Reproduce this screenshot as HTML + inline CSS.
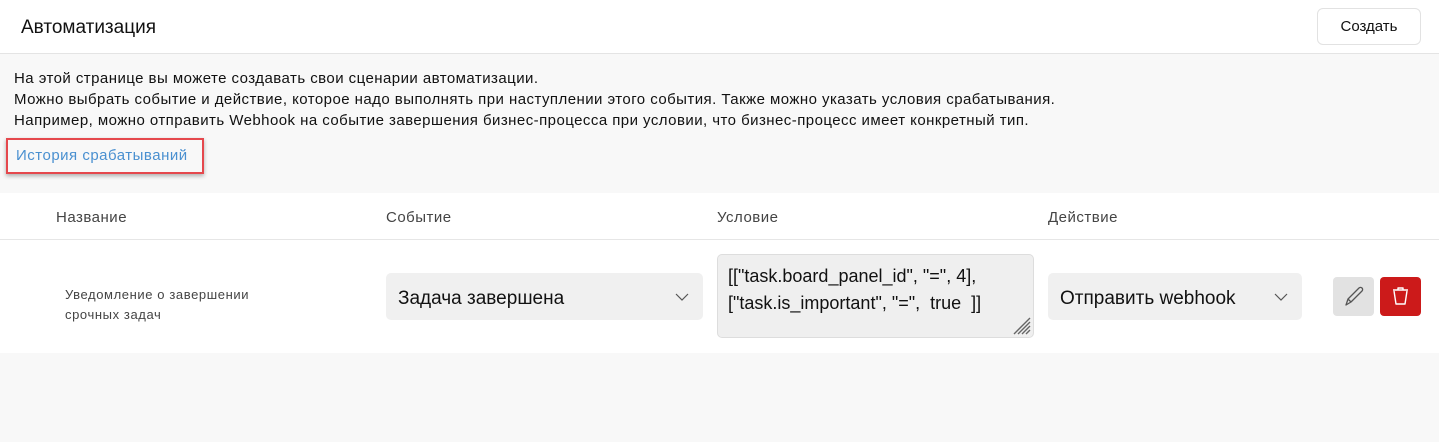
<!DOCTYPE html>
<html><head><meta charset="utf-8"><style>
*{box-sizing:border-box;margin:0;padding:0}
body{width:1439px;height:442px;background:#f8f8f8;font-family:"Liberation Sans","DejaVu Sans",sans-serif;color:#111;position:relative;overflow:hidden}
.abs{position:absolute}
.hdr{left:0;top:0;width:1439px;height:54px;background:#fff;border-bottom:1px solid #e4e4e4}
.title{left:21px;top:17px;font-size:19px;color:#111}
.btn{left:1317px;top:8px;width:104px;height:37px;border:1px solid #e2e2e2;border-radius:6px;background:#fff;font-size:15px;text-align:center;line-height:35px}
.desc{left:14px;top:68px;font-size:15px;letter-spacing:.45px;line-height:21px;color:#111;white-space:nowrap}
.link{left:6px;top:138px;width:198px;height:36px;border:2px solid #e5484d;box-shadow:0 2px 4px rgba(0,0,0,.3);color:#4a90d0;font-size:15px;letter-spacing:.5px;padding:7px 0 0 8px;white-space:nowrap}
.tbl{left:0;top:193px;width:1439px;height:160px;background:#fff}
.th{top:209px;font-size:15px;letter-spacing:.5px;color:#444}
.line{left:0;top:239px;width:1439px;height:1px;background:#e6e6e6}
.name{left:65px;top:285px;font-size:13px;letter-spacing:.6px;line-height:20px;color:#444}
.sel{top:273px;height:47px;background:#f0f0f0;border-radius:5px;font-size:19px;padding:15px 0 0 12px;color:#111;white-space:nowrap}
.chev{position:absolute;right:14px;top:20px}
.ta{left:717px;top:254px;width:317px;height:84px;background:#efefef;border:1px solid #ddd;border-radius:5px;font-size:18px;line-height:27px;padding:8px 0 0 10px;white-space:nowrap}
.ib{top:277px;width:41px;height:39px;border-radius:4px}
</style></head><body>
<div class="abs hdr"></div>
<div class="abs title">Автоматизация</div>
<div class="abs btn">Создать</div>
<div class="abs desc">На этой странице вы можете создавать свои сценарии автоматизации.<br>Можно выбрать событие и действие, которое надо выполнять при наступлении этого события. Также можно указать условия срабатывания.<br>Например, можно отправить Webhook на событие завершения бизнес-процесса при условии, что бизнес-процесс имеет конкретный тип.</div>
<div class="abs link">История срабатываний</div>
<div class="abs tbl"></div>
<div class="abs th" style="left:56px">Название</div>
<div class="abs th" style="left:386px">Событие</div>
<div class="abs th" style="left:717px">Условие</div>
<div class="abs th" style="left:1048px">Действие</div>
<div class="abs line"></div>
<div class="abs name">Уведомление о завершении<br>срочных задач</div>
<div class="abs sel" style="left:386px;width:317px">Задача завершена<svg class="chev" width="14" height="9" viewBox="0 0 14 9"><path d="M1 1l6 6 6-6" fill="none" stroke="#555" stroke-width="1.2"/></svg></div>
<div class="abs ta">[["task.board_panel_id", "=", 4],<br>["task.is_important", "=",&nbsp; true&nbsp; ]]
<svg style="position:absolute;right:2px;bottom:2px" width="18" height="18" viewBox="0 0 18 18"><path d="M17 5L5 17M17 9L9 17M17 13L13 17M17 1L1 17" stroke="#666" stroke-width="1.4"/></svg></div>
<div class="abs sel" style="left:1048px;width:254px">Отправить webhook<svg class="chev" width="14" height="9" viewBox="0 0 14 9"><path d="M1 1l6 6 6-6" fill="none" stroke="#555" stroke-width="1.2"/></svg></div>
<div class="abs ib" style="left:1333px;background:#e2e2e2"><svg width="41" height="39" viewBox="0 0 41 39"><path d="M13 28l2-6 11-11a2 2 0 0 1 3 3L18 25z M15 22l3 3" fill="none" stroke="#555" stroke-width="1.3" stroke-linejoin="round"/></svg></div>
<div class="abs ib" style="left:1380px;background:#cc1a1a"><svg width="41" height="39" viewBox="0 0 41 39"><path d="M13 13h15M18 13v-2h5v2M14 14l2 13h9l2-13" fill="none" stroke="#fff" stroke-width="1.4" stroke-linejoin="round"/></svg></div>
</body></html>
